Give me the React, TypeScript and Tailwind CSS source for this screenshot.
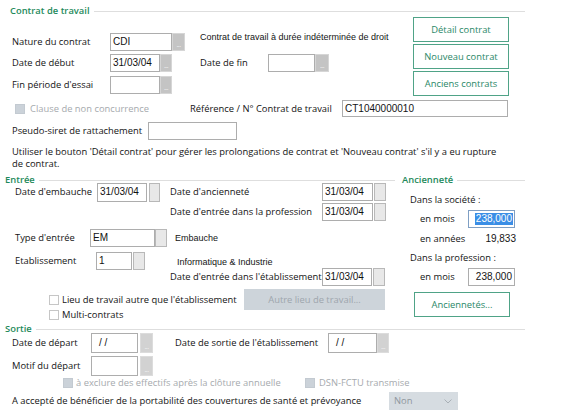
import React from "react";

const LIB = "font-['Liberation_Sans',Arial,sans-serif]";

type BtnKind = "dark" | "light" | "mid";

function Dots({ kind }: { kind: BtnKind }) {
  const cls =
    kind === "dark"
      ? "bg-[#c4c4c4] border-[#d6d6d6]"
      : kind === "mid"
      ? "bg-[#d2d2d2] border-[#dcdcdc]"
      : "bg-[#e8e8e8] border-[#b8b8b8]";
  return (
    <div className={`h-full border flex items-end justify-center pb-[3px] ${cls}`}>
      {kind !== "light" && (
        <span className="text-[7px] leading-[4px] text-[#f4f4f4] tracking-[-0.5px]">...</span>
      )}
    </div>
  );
}

function Field({
  w,
  bw,
  gap = 0,
  value = "",
  kind = "dark",
  h = "h-[18px]",
  pad = "pl-[2px]",
}: {
  w: string;
  bw: string;
  gap?: number;
  value?: string;
  kind?: BtnKind;
  h?: string;
  pad?: string;
}) {
  return (
    <div className={`flex ${h}`}>
      <div
        className={`${w} h-full bg-white border border-[#adadad] flex items-center ${pad} ${LIB} text-[10px] text-[#111] whitespace-pre`}
      >
        {value}
      </div>
      <div className={`${bw} h-full ${gap === 2 ? "ml-[2px]" : gap === 1 ? "ml-[1px]" : ""}`}>
        <Dots kind={kind} />
      </div>
    </div>
  );
}

function GreenBtn({ label, h = "h-[25px]" }: { label: string; h?: string }) {
  return (
    <div
      className={`w-[96px] ${h} border border-[#4fa387] bg-white flex items-center justify-center text-[#2a8868]`}
    >
      {label}
    </div>
  );
}

function Header({ label, cls = "" }: { label: string; cls?: string }) {
  return (
    <div className={`flex items-center h-[10px] ${cls}`}>
      <span className="font-semibold text-[#1e8a5b] whitespace-nowrap leading-[10px]">{label}</span>
      <div className="flex-1 h-px bg-[#dedede] ml-[4px] mt-[1px]" />
    </div>
  );
}

function Check({ disabled = false }: { disabled?: boolean }) {
  return (
    <div
      className={`w-[10px] h-[10px] shrink-0 border ${
        disabled ? "bg-[#cbd2d9] border-[#c3cad1]" : "bg-white border-[#c6c6c6]"
      }`}
    />
  );
}

export default function App() {
  return (
    <div className="w-[576px] h-[411px] bg-white overflow-hidden font-['Open_Sans',sans-serif] text-[9.4px] text-[#141414] leading-[12px]">
      {/* Contrat de travail */}
      <div className="w-[525px] pl-[10px] pt-[6px]">
        <Header label="Contrat de travail" />
      </div>
      <div className="flex mt-[1px]">
        <div className="w-[413px] pl-[12px] flex flex-col">
          <div className="flex items-center h-[18px] mt-[16px]">
            <span className="w-[98px]">Nature du contrat</span>
            <Field w="w-[62px]" bw="w-[13px]" value="CDI" />
            <span className={`ml-[15px] self-start -mt-[2px] ${LIB} text-[9px] whitespace-nowrap`}>
              Contrat de travail à durée indéterminée de droit
            </span>
          </div>
          <div className="flex items-center h-[18px] mt-[3px]">
            <span className="w-[98px]">Date de début</span>
            <Field w="w-[50px]" bw="w-[12px]" value="31/03/04" />
            <span className="ml-[28px] w-[68px]">Date de fin</span>
            <Field w="w-[47px]" bw="w-[14px]" />
          </div>
          <div className="flex items-center h-[18px] mt-[4px]">
            <span className="w-[98px]">Fin période d'essai</span>
            <Field w="w-[50px]" bw="w-[12px]" />
          </div>
        </div>
        <div className="flex flex-col gap-[2px]">
          <GreenBtn label="Détail contrat" />
          <GreenBtn label="Nouveau contrat" />
          <GreenBtn label="Anciens contrats" />
        </div>
      </div>

      <div className="flex items-center h-[17px] mt-[4px] pl-[15px]">
        <div className="w-[175px] flex items-center">
          <Check disabled />
          <span className="ml-[5px] text-[#a6aaae] whitespace-nowrap">Clause de non concurrence</span>
        </div>
        <span className="w-[152px] whitespace-nowrap">Référence / N° Contrat de travail</span>
        <div
          className={`w-[166px] h-full bg-white border border-[#adadad] flex items-center pl-[2px] ${LIB} text-[10px]`}
        >
          CT1040000010
        </div>
      </div>

      <div className="flex items-center h-[18px] mt-[5px] pl-[12px]">
        <span className="w-[136px] whitespace-nowrap">Pseudo-siret de rattachement</span>
        <div className="w-[89px] h-full bg-white border border-[#adadad]" />
      </div>

      <div className="mt-[6px] pl-[12px] leading-[12px] whitespace-nowrap">
        Utiliser le bouton 'Détail contrat' pour gérer les prolongations de contrat et 'Nouveau contrat' s'il y a eu rupture
        <br />
        de contrat.
      </div>

      {/* Entrée / Ancienneté */}
      <div className="flex mt-[5px]">
        <div className="w-[397px] flex flex-col">
          <Header label="Entrée" cls="pl-[5px] pr-[2px]" />
          <div className="flex items-center h-[18px] -mt-[2px] pl-[15px]">
            <span className="w-[82px] whitespace-nowrap">Date d'embauche</span>
            <Field w="w-[50px]" bw="w-[11px]" gap={2} value="31/03/04" kind="light" h="h-[19px]" />
            <span className="ml-[10px] w-[152px] whitespace-nowrap">Date d'ancienneté</span>
            <Field w="w-[51px]" bw="w-[12px]" gap={1} value="31/03/04" kind="light" />
          </div>
          <div className="flex items-center h-[18px] mt-[2px] pl-[170px]">
            <span className="w-[152px] whitespace-nowrap">Date d'entrée dans la profession</span>
            <Field w="w-[51px]" bw="w-[12px]" gap={1} value="31/03/04" kind="light" />
          </div>
          <div className="flex items-center h-[18px] mt-[8px] pl-[15px]">
            <span className="w-[75px] whitespace-nowrap">Type d'entrée</span>
            <Field w="w-[65px]" bw="w-[12px]" value="EM" kind="light" />
            <span className={`ml-[8px] ${LIB} text-[9px]`}>Embauche</span>
          </div>
          <div className="flex items-center h-[18px] mt-[5px] pl-[15px]">
            <span className="w-[81px] whitespace-nowrap">Etablissement</span>
            <Field w="w-[36px]" bw="w-[12px]" gap={1} value="1" kind="light" />
            <span className={`ml-[32px] mt-[1px] ${LIB} text-[9px] whitespace-nowrap`}>Informatique &amp; Industrie</span>
          </div>
          <div className="flex items-center h-[18px] -mt-[2px] pl-[170px]">
            <span className="w-[152px] whitespace-nowrap">Date d'entrée dans l'établissement</span>
            <Field w="w-[50px]" bw="w-[12px]" gap={1} value="31/03/04" kind="light" />
          </div>
          <div className="flex items-center h-[21px] mt-[3px] pl-[49px]">
            <div className="w-[195px] flex items-center">
              <Check />
              <span className="ml-[3px] whitespace-nowrap">Lieu de travail autre que l'établissement</span>
            </div>
            <div className="w-[141px] h-full bg-[#cdd4da] flex items-center justify-center text-[#9ea6ad]">
              Autre lieu de travail...
            </div>
          </div>
          <div className="flex items-center h-[11px] -mt-[1px] pl-[49px]">
            <Check />
            <span className="ml-[3px]">Multi-contrats</span>
          </div>
        </div>

        <div className="w-[128px] flex flex-col">
          <Header label="Ancienneté" cls="pl-[5px]" />
          <div className="h-[12px] mt-[9px] pl-[13px] flex items-center">Dans la société :</div>
          <div className="flex items-center h-[18px] mt-[4px] pl-[23px]">
            <span className="w-[48px]">en mois</span>
            <div
              className={`w-[47px] h-full bg-white border border-[#7f9fc4] flex items-center justify-end pr-[1px] ${LIB} text-[10px]`}
            >
              <span className="bg-[#3a8ee6] text-white leading-[12px] px-[1px]">238,000</span>
            </div>
          </div>
          <div className="flex items-center h-[12px] mt-[5px] pl-[23px]">
            <span className="w-[48px]">en années</span>
            <span className={`w-[48px] text-right ${LIB} text-[10px]`}>19,833</span>
          </div>
          <div className="h-[12px] mt-[7px] pl-[13px] flex items-center">Dans la profession :</div>
          <div className="flex items-center h-[18px] mt-[4px] pl-[23px]">
            <span className="w-[48px]">en mois</span>
            <div
              className={`w-[47px] h-full bg-white border border-[#adadad] flex items-center justify-end pr-[2px] ${LIB} text-[10px]`}
            >
              238,000
            </div>
          </div>
          <div className="mt-[6px] pl-[17px]">
            <GreenBtn label="Anciennetés..." />
          </div>
        </div>
      </div>

      {/* Sortie */}
      <div className="w-[525px] pl-[5px] mt-[4px]">
        <Header label="Sortie" />
      </div>
      <div className="flex items-center h-[20px] -mt-[1px] pl-[12px]">
        <span className="w-[79px] whitespace-nowrap">Date de départ</span>
        <Field w="w-[47px]" bw="w-[13px]" gap={2} value="/ /" kind="mid" h="h-[20px]" pad="pl-[7px]" />
        <span className="ml-[22px] w-[153px] whitespace-nowrap">Date de sortie de l'établissement</span>
        <Field w="w-[49px]" bw="w-[12px]" value="/ /" kind="mid" h="h-[20px]" pad="pl-[7px]" />
      </div>
      <div className="flex items-center h-[20px] mt-[3px] pl-[12px]">
        <span className="w-[79px] whitespace-nowrap">Motif du départ</span>
        <Field w="w-[47px]" bw="w-[13px]" gap={2} kind="mid" h="h-[20px]" />
      </div>
      <div className="flex items-center h-[10px] mt-[2px] pl-[63px] text-[#a6aaae]">
        <div className="w-[242px] flex items-center">
          <Check disabled />
          <span className="ml-[3px] whitespace-nowrap">à exclure des effectifs après la clôture annuelle</span>
        </div>
        <Check disabled />
        <span className="ml-[4px] whitespace-nowrap">DSN-FCTU transmise</span>
      </div>
      <div className="flex items-center h-[18px] mt-[4px] pl-[12px]">
        <span className="w-[377px] whitespace-nowrap">
          A accepté de bénéficier de la portabilité des couvertures de santé et prévoyance
        </span>
        <div className="w-[69px] h-full bg-[#d6dce1] flex items-center justify-between pl-[5px] pr-[6px] text-[#8f979e]">
          <span>Non</span>
          <svg width="8" height="5" viewBox="0 0 8 5">
            <path d="M0.5 0.5 L4 4 L7.5 0.5" fill="none" stroke="#a9b0b6" strokeWidth="1" />
          </svg>
        </div>
      </div>
    </div>
  );
}
